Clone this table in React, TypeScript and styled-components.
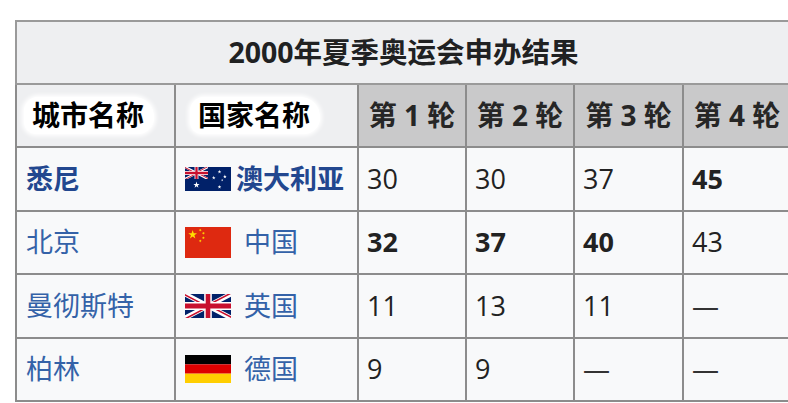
import React from "react";
import styled, { createGlobalStyle } from "styled-components";

const GlobalStyle = createGlobalStyle`
  html, body {
    margin: 0;
    padding: 0;
    background: #ffffff;
    overflow: hidden;
  }
  body {
    font-family: "Open Sans", "Noto Sans CJK SC", sans-serif;
    color: #202122;
  }
`;

const Page = styled.div`
  width: 788px;
  height: 403px;
  padding: 20px 0 0 15px;
  box-sizing: border-box;
  overflow: hidden;
`;

const Table = styled.table`
  width: 775px;
  table-layout: fixed;
  border-collapse: collapse;
  border: 2px solid #9a9a9a;
  font-family: "Open Sans", "Noto Sans CJK SC", sans-serif;
  font-size: 27px;
  line-height: 1.2;
`;

const TitleCell = styled.th`
  height: 61px;
  padding: 0;
  background: #eeeff1;
  border: 2px solid #9a9a9a;
  font-size: 28.5px;
  font-weight: 700;
  color: #202122;
  text-align: center;
  vertical-align: middle;
`;

const HeadCell = styled.th<{ $round?: boolean; $pad?: number }>`
  height: 61px;
  padding: 0 0 0 ${(p) => (p.$pad ?? 0)}px;
  background: ${(p) => (p.$round ? "#c9c9ca" : "#eeeff1")};
  border: 2px solid #8c8c8c;
  font-size: 28px;
  font-weight: 700;
  color: ${(p) => (p.$round ? "#262626" : "#000")};
  text-align: ${(p) => (p.$round ? "center" : "left")};
  vertical-align: middle;
  white-space: nowrap;
`;

const Marker = styled.span`
  display: inline-block;
  background: #ffffff;
  padding: 2px 10px 2px 8px;
  margin-left: -8px;
  border-radius: 14px 20px 16px 12px;
  box-shadow: 0 0 4px 2px #ffffff;
`;

const Cell = styled.td<{ $bold?: boolean }>`
  height: 61.5px;
  padding: 0 0 0 8px;
  background: #f8f9fa;
  border: 2px solid #8c8c8c;
  font-weight: ${(p) => (p.$bold ? 700 : 400)};
  color: #222;
  vertical-align: middle;
  white-space: nowrap;
`;

const CityCell = styled(Cell)`
  padding-left: 9px;
`;

const CityLink = styled.a<{ $bold?: boolean }>`
  color: ${(p) => (p.$bold ? "#22478f" : "#3462a8")};
  font-weight: ${(p) => (p.$bold ? 700 : 400)};
  text-decoration: none;
`;

const CountryCell = styled(Cell)`
  padding-left: 9px;
`;

const CountryBox = styled.span`
  display: flex;
  align-items: center;
`;

const FlagBox = styled.span`
  display: inline-flex;
  align-items: center;
  width: 47px;
  flex: none;
`;

const CountryName = styled.a<{ $bold?: boolean; $gap: number }>`
  margin-left: ${(p) => p.$gap}px;
  color: ${(p) => (p.$bold ? "#22478f" : "#3462a8")};
  font-weight: ${(p) => (p.$bold ? 700 : 400)};
  text-decoration: none;
`;

const Dash = styled.span`
  color: #333;
`;

function starPoints(cx: number, cy: number, r: number, rot = 0): string {
  const pts: string[] = [];
  for (let i = 0; i < 10; i++) {
    const rad = i % 2 === 0 ? r : r * 0.4;
    const a = ((-90 + rot + i * 36) * Math.PI) / 180;
    pts.push(`${(cx + rad * Math.cos(a)).toFixed(2)},${(cy + rad * Math.sin(a)).toFixed(2)}`);
  }
  return pts.join(" ");
}

function UnionJack({ id }: { id: string }) {
  return (
    <>
      <defs>
        <clipPath id={`${id}-s`}>
          <path d="M0,0 v30 h60 v-30 z" />
        </clipPath>
        <clipPath id={`${id}-t`}>
          <path d="M30,15 h30 v15 z v15 h-30 z h-30 v-15 z v-15 h30 z" />
        </clipPath>
      </defs>
      <g clipPath={`url(#${id}-s)`}>
        <path d="M0,0 v30 h60 v-30 z" fill="#012169" />
        <path d="M0,0 L60,30 M60,0 L0,30" stroke="#fff" strokeWidth="6" />
        <path d="M0,0 L60,30 M60,0 L0,30" clipPath={`url(#${id}-t)`} stroke="#C8102E" strokeWidth="4" />
        <path d="M30,0 v30 M0,15 h60" stroke="#fff" strokeWidth="10" />
        <path d="M30,0 v30 M0,15 h60" stroke="#C8102E" strokeWidth="6" />
      </g>
    </>
  );
}

function FlagUK() {
  return (
    <svg width="46" height="24" viewBox="0 0 60 30" preserveAspectRatio="none">
      <UnionJack id="uk" />
    </svg>
  );
}

function FlagAU() {
  return (
    <svg width="46" height="24" viewBox="0 0 120 60" preserveAspectRatio="none">
      <rect width="120" height="60" fill="#012169" />
      <UnionJack id="au" />
      <polygon points={starPoints(30, 45, 8.5)} fill="#fff" />
      <polygon points={starPoints(90, 50, 5)} fill="#fff" />
      <polygon points={starPoints(75, 27, 5)} fill="#fff" />
      <polygon points={starPoints(90, 12, 5)} fill="#fff" />
      <polygon points={starPoints(104, 24, 5)} fill="#fff" />
      <polygon points={starPoints(97, 33, 3)} fill="#fff" />
    </svg>
  );
}

function FlagCN() {
  return (
    <svg width="46" height="31" viewBox="0 0 30 20" preserveAspectRatio="none">
      <rect width="30" height="20" fill="#de2910" />
      <polygon points={starPoints(5, 5, 3)} fill="#ffde00" />
      <polygon points={starPoints(10, 2, 1, 23)} fill="#ffde00" />
      <polygon points={starPoints(12, 4, 1, 45)} fill="#ffde00" />
      <polygon points={starPoints(12, 7, 1, 0)} fill="#ffde00" />
      <polygon points={starPoints(10, 9, 1, 20)} fill="#ffde00" />
    </svg>
  );
}

function FlagDE() {
  return (
    <svg width="46" height="28" viewBox="0 0 5 3" preserveAspectRatio="none">
      <rect width="5" height="1" y="0" fill="#000" />
      <rect width="5" height="1" y="1" fill="#dd0000" />
      <rect width="5" height="1" y="2" fill="#ffce00" />
    </svg>
  );
}

type Score = { v: string; bold?: boolean };
type Row = {
  city: string;
  country: string;
  flag: React.ReactNode;
  winner?: boolean;
  gap: number;
  scores: Score[];
};

const rows: Row[] = [
  {
    city: "悉尼",
    country: "澳大利亚",
    flag: <FlagAU />,
    winner: true,
    gap: 4,
    scores: [{ v: "30" }, { v: "30" }, { v: "37" }, { v: "45", bold: true }],
  },
  {
    city: "北京",
    country: "中国",
    flag: <FlagCN />,
    gap: 12,
    scores: [{ v: "32", bold: true }, { v: "37", bold: true }, { v: "40", bold: true }, { v: "43" }],
  },
  {
    city: "曼彻斯特",
    country: "英国",
    flag: <FlagUK />,
    gap: 12,
    scores: [{ v: "11" }, { v: "13" }, { v: "11" }, { v: "—" }],
  },
  {
    city: "柏林",
    country: "德国",
    flag: <FlagDE />,
    gap: 12,
    scores: [{ v: "9" }, { v: "9" }, { v: "—" }, { v: "—" }],
  },
];

const rounds = ["第 1 轮", "第 2 轮", "第 3 轮", "第 4 轮"];

export default function App() {
  return (
    <>
      <GlobalStyle />
      <Page>
        <Table>
          <colgroup>
            <col style={{ width: 159 }} />
            <col style={{ width: 183 }} />
            <col style={{ width: 108 }} />
            <col style={{ width: 108 }} />
            <col style={{ width: 109 }} />
            <col style={{ width: 108 }} />
          </colgroup>
          <thead>
            <tr>
              <TitleCell colSpan={6}>2000年夏季奥运会申办结果</TitleCell>
            </tr>
            <tr>
              <HeadCell $pad={15}>
                <Marker>城市名称</Marker>
              </HeadCell>
              <HeadCell $pad={22}>
                <Marker>国家名称</Marker>
              </HeadCell>
              {rounds.map((r) => (
                <HeadCell key={r} $round>
                  {r}
                </HeadCell>
              ))}
            </tr>
          </thead>
          <tbody>
            {rows.map((row) => (
              <tr key={row.city}>
                <CityCell>
                  <CityLink $bold={row.winner}>{row.city}</CityLink>
                </CityCell>
                <CountryCell>
                  <CountryBox>
                    <FlagBox>{row.flag}</FlagBox>
                    <CountryName $bold={row.winner} $gap={row.gap}>
                      {row.country}
                    </CountryName>
                  </CountryBox>
                </CountryCell>
                {row.scores.map((s, i) => (
                  <Cell key={i} $bold={s.bold}>
                    {s.v === "—" ? <Dash>—</Dash> : s.v}
                  </Cell>
                ))}
              </tr>
            ))}
          </tbody>
        </Table>
      </Page>
    </>
  );
}
